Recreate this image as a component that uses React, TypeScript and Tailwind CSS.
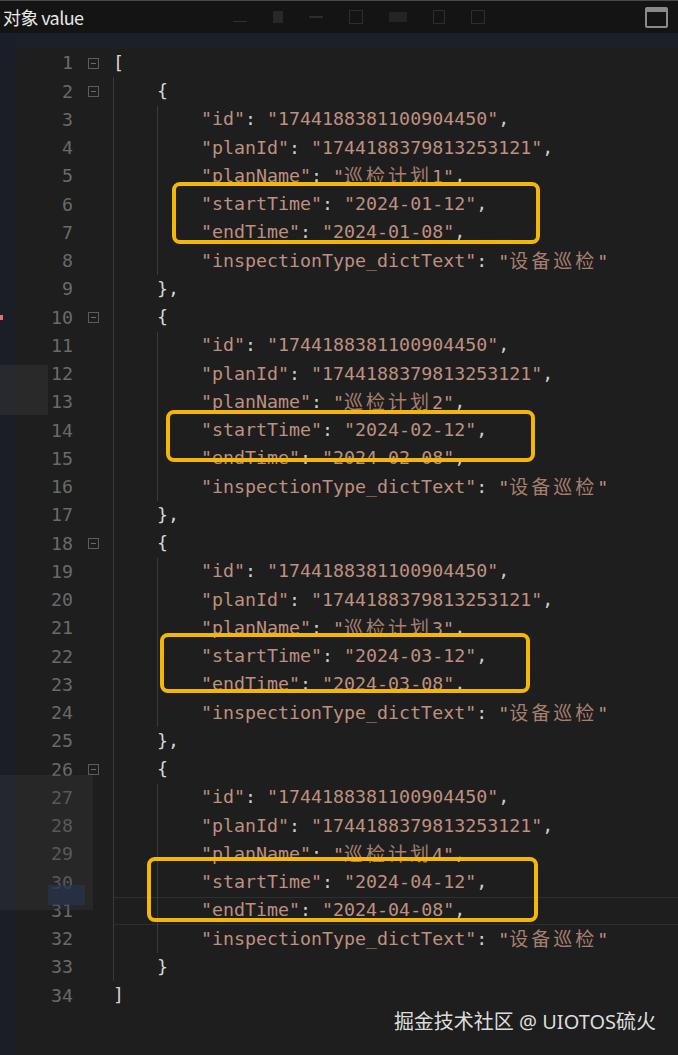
import React from "react";

type Tok = { t: string; k: "s" | "p" | "c" };

const STR = "text-[#bf9080]";
const PUN = "text-[#cdcdcd]";

function cjkSplit(s: string) {
  const parts: { t: string; cjk: boolean }[] = [];
  let buf = "";
  let cur: boolean | null = null;
  for (const ch of s) {
    const isC = /[\u4e00-\u9fff]/.test(ch);
    if (cur === null || cur === isC) {
      buf += ch;
      cur = isC;
    } else {
      parts.push({ t: buf, cjk: cur });
      buf = ch;
      cur = isC;
    }
  }
  if (buf) parts.push({ t: buf, cjk: !!cur });
  return parts;
}

function kv(key: string, val: string, last = false): Tok[] {
  const r: Tok[] = [
    { t: `"${key}"`, k: "s" },
    { t: ": ", k: "p" },
    { t: `"${val}"`, k: "s" },
  ];
  if (!last) r.push({ t: ",", k: "p" });
  return r;
}

type Line = { indent: number; toks: Tok[]; fold?: boolean };

const lines: Line[] = [];
lines.push({ indent: 0, toks: [{ t: "[", k: "c" }], fold: true });
const months = ["01", "02", "03", "04"];
months.forEach((m, i) => {
  lines.push({ indent: 1, toks: [{ t: "{", k: "c" }], fold: true });
  lines.push({ indent: 2, toks: kv("id", "1744188381100904450") });
  lines.push({ indent: 2, toks: kv("planId", "1744188379813253121") });
  lines.push({ indent: 2, toks: kv("planName", `巡检计划${i + 1}`) });
  lines.push({ indent: 2, toks: kv("startTime", `2024-${m}-12`) });
  lines.push({ indent: 2, toks: kv("endTime", `2024-${m}-08`) });
  lines.push({ indent: 2, toks: kv("inspectionType_dictText", "设备巡检", true) });
  lines.push({
    indent: 1,
    toks: i < 3 ? [{ t: "},", k: "c" }] : [{ t: "}", k: "c" }],
  });
});
lines.push({ indent: 0, toks: [{ t: "]", k: "c" }] });

function TokView({ tok }: { tok: Tok }) {
  const cls = tok.k === "s" ? STR : tok.k === "p" ? PUN : "text-[#d6d6d6]";
  return (
    <span className={cls}>
      {cjkSplit(tok.t).map((p, i) =>
        p.cjk ? (
          <span
            key={i}
            className="text-[19px] tracking-[3px] font-['Noto_Sans_CJK_SC',sans-serif] opacity-85"
          >
            {p.t}
          </span>
        ) : (
          <span key={i} className="whitespace-pre">
            {p.t}
          </span>
        )
      )}
    </span>
  );
}

function FoldIcon() {
  return (
    <span className="flex h-[11px] w-[11px] items-center justify-center border border-[#5c5c5c]">
      <span className="h-px w-[5px] bg-[#6a6a6a]" />
    </span>
  );
}

export default function App() {
  return (
    <div className="relative h-[1055px] w-[678px] overflow-hidden bg-[#1e1e1e] font-['DejaVu_Sans_Mono',monospace]">
      {/* title bar */}
      <div className="relative flex h-[33px] items-center justify-between border-t border-[#4a4a4a] bg-[#141414] pl-[3px] pr-[10px]">
        <span className="text-[18px] tracking-[-0.6px] text-[#e8e8e8] font-['Noto_Sans_CJK_SC',sans-serif] leading-none">
          对象 value
        </span>
        <div className="flex items-center gap-[26px] opacity-25">
          <span className="h-[10px] w-[14px] border-b border-[#888]" />
          <span className="h-[12px] w-[10px] bg-[#666]" />
          <span className="h-[2px] w-[14px] bg-[#777]" />
          <span className="h-[14px] w-[14px] border border-[#777]" />
          <span className="h-[10px] w-[18px] bg-[#555]" />
          <span className="h-[14px] w-[12px] border border-[#777]" />
          <span className="h-[14px] w-[14px] border border-[#777]" />
        </div>
        <span className="ml-[10px] flex h-[21px] w-[23px] flex-col rounded-[2px] border-2 border-[#8a8a8a]">
          <span className="h-[3px] w-full bg-[#8a8a8a]" />
        </span>
      </div>
      <div className="h-[16px] bg-[#1c2028]" />

      {/* code */}
      <div className="relative flex flex-col text-[18.3px]">
        {lines.map((ln, idx) => {
          const n = idx + 1;
          const current = n === 31;
          return (
            <div key={n} className="flex h-[28.25px] items-stretch">
              <div className="flex w-[113px] items-center">
                <span className="w-[73px] text-right text-[#6a6a6a]">{n}</span>
                <span className="flex w-[40px] items-center justify-center">
                  {ln.fold ? <FoldIcon /> : null}
                </span>
              </div>
              <div
                className={
                  "flex flex-1 items-stretch " +
                  (current
                    ? "shadow-[inset_0_1px_0_#2f2f2f,inset_0_-1px_0_#2f2f2f]"
                    : "")
                }
              >
                {Array.from({ length: ln.indent }).map((_, j) => (
                  <span key={j} className="w-[44px] shrink-0 border-l border-[#3a3a3a]" />
                ))}
                <span className="flex items-center leading-none">
                  {ln.toks.map((t, j) => (
                    <TokView key={j} tok={t} />
                  ))}
                </span>
              </div>
            </div>
          );
        })}
      </div>

      {/* ghost overlays from background window */}
      <div className="pointer-events-none absolute left-0 top-[33px] h-[1022px] w-[16px] bg-[#1a1e29] opacity-80" />
      <div className="pointer-events-none absolute left-0 top-[365px] h-[50px] w-[48px] bg-[#3a3a3c] opacity-40" />
      <div className="pointer-events-none absolute left-0 top-[775px] h-[135px] w-[93px] bg-[#3a3a3c] opacity-35" />
      <div className="pointer-events-none absolute left-[48px] top-[885px] h-[20px] w-[37px] bg-[#26344d] opacity-70" />
      <div className="pointer-events-none absolute left-0 top-[315px] h-[5px] w-[3px] bg-[#e0707a]" />

      {/* annotation boxes */}
      <div className="pointer-events-none absolute left-[172px] top-[182px] h-[62px] w-[368px] rounded-[8px] border-[4px] border-[#f4b708]" />
      <div className="pointer-events-none absolute left-[166px] top-[410px] h-[52px] w-[369px] rounded-[8px] border-[4px] border-[#f4b708]" />
      <div className="pointer-events-none absolute left-[160px] top-[633px] h-[60px] w-[370px] rounded-[8px] border-[4px] border-[#f4b708]" />
      <div className="pointer-events-none absolute left-[147px] top-[857px] h-[65px] w-[391px] rounded-[8px] border-[4px] border-[#f4b708]" />

      {/* watermark */}
      <div className="pointer-events-none absolute right-[22px] top-[1008px] text-[20px] text-[#dcdcdc] font-['Noto_Sans','Noto_Sans_CJK_SC',sans-serif] leading-[28px]">
        掘金技术社区 @ UIOTOS硫火
      </div>
    </div>
  );
}
